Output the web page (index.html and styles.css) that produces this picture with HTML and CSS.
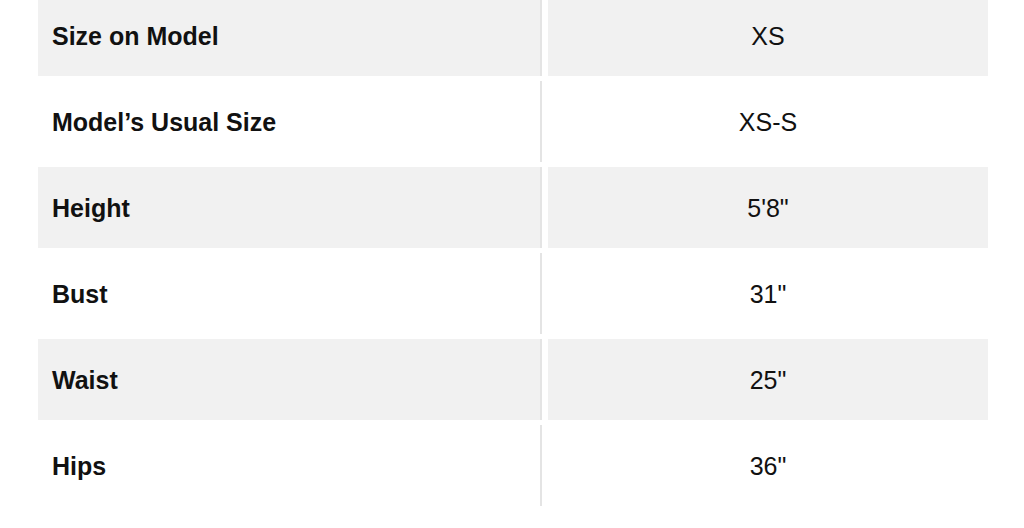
FILE: index.html
```html
<!DOCTYPE html>
<html lang="en">
<head>
<meta charset="utf-8">
<title>Model Measurements</title>
<link rel="stylesheet" href="styles.css">
</head>
<body>
<div class="size-table">
  <div class="cell label alt">Size on Model</div>
  <div class="cell value alt">XS</div>
  <div class="cell label">Model’s Usual Size</div>
  <div class="cell value">XS-S</div>
  <div class="cell label alt">Height</div>
  <div class="cell value alt">5'8"</div>
  <div class="cell label">Bust</div>
  <div class="cell value">31"</div>
  <div class="cell label alt">Waist</div>
  <div class="cell value alt">25"</div>
  <div class="cell label">Hips</div>
  <div class="cell value">36"</div>
</div>
</body>
</html>
```

FILE: styles.css
```css
html, body {
  margin: 0;
  padding: 0;
  background: #ffffff;
}

body {
  font-family: "Liberation Sans", Arial, sans-serif;
  color: #111111;
  overflow: hidden;
}

.size-table {
  display: grid;
  grid-template-columns: 504px 440px;
  grid-auto-rows: 81px;
  column-gap: 6px;
  row-gap: 5px;
  margin: -5px 0 0 38px;
}

.cell {
  display: flex;
  align-items: center;
  font-size: 25px;
  box-sizing: border-box;
  padding-top: 2px;
}

.cell.alt {
  background: #f1f1f1;
}

.label {
  font-weight: bold;
  padding-left: 14px;
  border-right: 2px solid #e4e4e4;
}

.value {
  justify-content: center;
  font-weight: normal;
}
```
